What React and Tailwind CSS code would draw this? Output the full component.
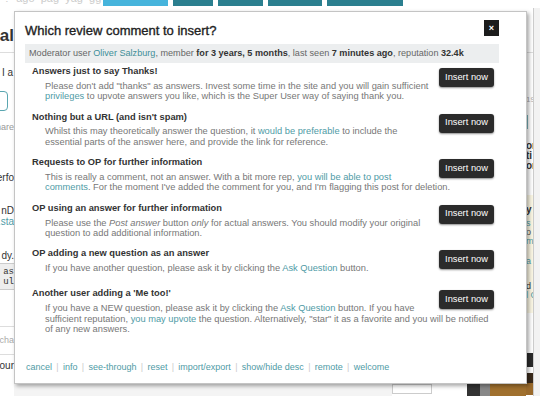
import React from 'react';

const FONT = "font-['Liberation_Sans',Arial,sans-serif]";

const Link = ({ children }) => <span className="text-[#4f9ba6]">{children}</span>;

const items = [
  {
    title: 'Answers just to say Thanks!',
    desc: (
      <>
        Please don't add "thanks" as answers. Invest some time in the site and you will gain sufficient{' '}
        <Link>privileges</Link> to upvote answers you like, which is the Super User way of saying thank you.
      </>
    ),
  },
  {
    title: "Nothing but a URL (and isn't spam)",
    desc: (
      <>
        Whilst this may theoretically answer the question, it <Link>would be preferable</Link> to include the
        essential parts of the answer here, and provide the link for reference.
      </>
    ),
  },
  {
    title: 'Requests to OP for further information',
    desc: (
      <>
        This is really a comment, not an answer. With a bit more rep, <Link>you will be able to post comments</Link>.
        For the moment I've added the comment for you, and I'm flagging this post for deletion.
      </>
    ),
  },
  {
    title: 'OP using an answer for further information',
    desc: (
      <>
        Please use the <i>Post answer</i> button <i>only</i> for actual answers. You should modify your original
        question to add additional information.
      </>
    ),
  },
  {
    title: 'OP adding a new question as an answer',
    desc: (
      <>
        If you have another question, please ask it by clicking the <Link>Ask Question</Link> button.
      </>
    ),
  },
  {
    title: "Another user adding a 'Me too!'",
    desc: (
      <>
        If you have a NEW question, please ask it by clicking the <Link>Ask Question</Link> button. If you have
        sufficient reputation, <Link>you may upvote</Link> the question. Alternatively, "star" it as a favorite and
        you will be notified of any new answers.
      </>
    ),
  },
];

const footerLinks = ['cancel', 'info', 'see-through', 'reset', 'import/export', 'show/hide desc', 'remote', 'welcome'];

const Item = ({ title, desc }) => (
  <div className="flow-root min-h-[31px] mb-[9px] pl-[7px] pr-[5px]">
    <button className="float-right ml-[4px] mt-[3px] h-[19px] w-[55px] rounded-[3px] bg-[#2b2b2b] text-[9.3px] text-white shadow-[0_1px_2px_rgba(0,0,0,0.45)]">
      Insert now
    </button>
    <div className="text-[9.3px] font-bold leading-[12px] text-[#333]">{title}</div>
    <div className="mt-[3.8px] pl-[13px] text-[9.3px] leading-[10.4px] text-[#777]">{desc}</div>
  </div>
);

const Cut = ({ children, className = '' }) => (
  <div className={`flex justify-end whitespace-nowrap ${className}`}>{children}</div>
);

const LeftStrip = () => (
  <div className="w-[14px] shrink-0 overflow-hidden flex flex-col">
    <div className="h-[18px]" />
    <Cut className="h-[20px] text-[17px] font-bold leading-[20px] text-[#333]">Bal</Cut>
    <div className="h-[7px] border-b border-[#ddd]" />
    <div className="h-[14px]" />
    <div className="h-[12px] pl-[2px] text-[10px] leading-[12px] text-[#333] whitespace-nowrap">I a</div>
    <div className="mt-[12px] h-[20px] w-[22px] -ml-[14px] rounded-[4px] border border-[#5aa6b0]" />
    <Cut className="mt-[10px] h-[12px] text-[9px] leading-[12px] text-[#999]">Share</Cut>
    <Cut className="mt-[39px] h-[12px] text-[10px] leading-[12px] text-[#333]">perfo</Cut>
    <Cut className="mt-[21px] h-[11px] text-[10px] leading-[11px] text-[#333]">nD</Cut>
    <Cut className="h-[11px] text-[10px] leading-[11px] text-[#4f9ba6]">.sta</Cut>
    <Cut className="mt-[23px] h-[12px] text-[10px] leading-[12px] text-[#333]">dy.</Cut>
    <div className="mt-[1px] h-[27px] border-y border-[#ccc] bg-[#eee] pt-[3px] font-['Liberation_Mono',monospace] text-[9px] leading-[10px] text-[#333]">
      <Cut>as</Cut>
      <Cut>ul</Cut>
    </div>
    <div className="mt-[36px] h-[29px] border-y border-[#ddd] flex items-center">
      <Cut className="w-full text-[9px] text-[#aaa]">cha</Cut>
    </div>
    <Cut className="mt-[5px] h-[12px] text-[10px] leading-[12px] text-[#333]">our</Cut>
  </div>
);

const RightStrip = () => (
  <div className="w-[14px] shrink-0 overflow-hidden flex">
    <div className="w-[7px] shrink-0 flex flex-col overflow-visible">
      <div className="h-[45px] border-b border-[#ddd]" />
      <div className="mt-[41px] h-[12px] whitespace-nowrap text-[8px] leading-[12px] text-[#aaa]">19</div>
      <div className="mt-[9px] h-[14px] w-[2px] bg-[#7ab4bc]" />
      <div className="mt-[12px] whitespace-nowrap text-[10px] font-bold leading-[10px] text-[#333]">
        <div>or</div>
        <div>ti</div>
        <div>or</div>
      </div>
      <div className="mt-[24px] h-[118px] w-[14px] bg-[#fbf7e4] pt-[10px] whitespace-nowrap text-[9px] leading-[9px]">
        <div className="font-bold text-[10px] text-[#333]">y</div>
        <div className="mt-[5px] text-[#4f9ba6]">s</div>
        <div className="text-[#555]">o t</div>
        <div className="text-[#4f9ba6]">m</div>
        <div className="mt-[11px] text-[#4f9ba6]">a</div>
        <div className="mt-[16px] text-[#333]">d</div>
        <div className="text-[#4f9ba6]">l C</div>
      </div>
      <div className="mt-[40px] h-[14px] w-[14px] bg-[#2a2a2a]" />
      <div className="mt-[6px] h-[10px] w-[14px] bg-[#3a2b1c]" />
      <div className="h-[12px] w-[14px] bg-[#9a6a2c]" />
    </div>
    <div className="w-[1px] shrink-0 bg-[#ccc]" />
    <div className="flex-1 bg-[#f2f2f2]" />
  </div>
);

export default function App() {
  return (
    <div className={`relative h-[396px] w-[540px] overflow-hidden bg-white ${FONT}`}>
      {/* page behind the dialog */}
      <div className="flex h-full flex-col">
        <div className="flex h-[8px] shrink-0 items-start overflow-hidden">
          <div className="-mt-[8px] w-[103px] shrink-0 whitespace-nowrap pl-[4px] text-[11px] leading-[12px] text-[#ccc]">
            ?&nbsp;&nbsp;ago&nbsp;&nbsp;pag&nbsp;&nbsp;yag&nbsp;&nbsp;gg
          </div>
          <div className="h-[6px] w-[65px] bg-[#46b4dc]" />
          <div className="ml-[5px] h-[6px] w-[40px] bg-[#2b7f8f]" />
          <div className="ml-[5px] h-[6px] w-[45px] bg-[#2b7f8f]" />
          <div className="ml-[5px] h-[6px] w-[54px] bg-[#2b7f8f]" />
          <div className="ml-[5px] h-[6px] w-[76px] bg-[#2b7f8f]" />
        </div>
        <div className="flex flex-1">
          <LeftStrip />
          <div className="flex flex-1 flex-col">
            <div className="flex-1" />
            <div className="flex h-[12px] items-start">
              <div className="h-[12px] flex-1 bg-[#f4f4f4]" />
              <div className="h-[10px] w-[40px] border border-[#ccc] bg-white" />
              <div className="h-[12px] w-[35px] bg-white" />
              <div className="h-[12px] w-[13px] bg-[#333]" />
              <div className="h-[12px] w-[10px] bg-[#888]" />
              <div className="h-[12px] w-[36px] bg-[#a0702e]" />
            </div>
          </div>
          <RightStrip />
        </div>
      </div>

      {/* dialog */}
      <div className="absolute left-[14px] top-[11px] flex h-[373px] w-[513px] flex-col border border-[#c4c4c4] bg-white pl-[10px] pr-[27px] pt-[10px] pb-[10px] shadow-[2px_2px_4px_rgba(0,0,0,0.35)]">
        <div className="flex h-[18px] items-start justify-between">
          <div className="text-[13px] leading-[18px] text-[#222] [-webkit-text-stroke:0.35px_#222]">
            Which review comment to insert?
          </div>
          <button className="-mt-[2px] flex h-[16px] w-[15px] items-center justify-center bg-[#1c1c1c] text-[9px] font-bold leading-none text-white">
            ×
          </button>
        </div>
        <div className="mt-[4px] h-[19px] whitespace-nowrap bg-[#eceeef] pl-[4px] text-[9.1px] leading-[19px] text-[#666]">
          Moderator user <span className="text-[#3f8e99]">Oliver Salzburg</span>, member{' '}
          <b className="text-[#333]">for 3 years, 5 months</b>, last seen <b className="text-[#333]">7 minutes ago</b>,
          reputation <b className="text-[#333]">32.4k</b>
        </div>
        <div className="mt-[2px]">
          {items.map((it) => (
            <Item key={it.title} title={it.title} desc={it.desc} />
          ))}
        </div>
        <div className="mt-auto flex h-[12px] items-center pl-[1px] text-[9px] leading-[12px]">
          {footerLinks.map((l, i) => (
            <React.Fragment key={l}>
              {i > 0 && <span className="mx-[4.3px] text-[#ccc]">|</span>}
              <span className="text-[#4f9ba6]">{l}</span>
            </React.Fragment>
          ))}
        </div>
      </div>
    </div>
  );
}
